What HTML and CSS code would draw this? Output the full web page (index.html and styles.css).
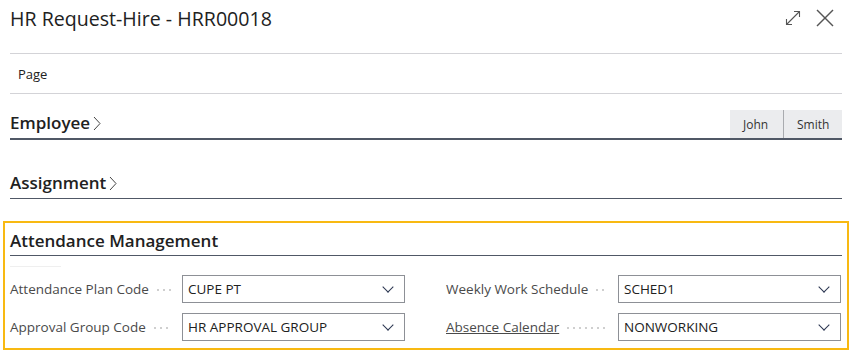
FILE: index.html
```html
<!DOCTYPE html>
<html lang="en">
<head>
  <meta charset="UTF-8" />
  <meta name="viewport" content="width=device-width, initial-scale=1" />
  <title>HR Request-Hire - HRR00018</title>
  <link rel="stylesheet" href="styles.css">
</head>
<body>
  <div class="page">
    <div class="page-header">
      <h1 class="page-title">HR Request-Hire - HRR00018</h1>
      <div class="window-actions">
        <button class="icon-btn" title="Expand">
          <svg width="16" height="16" viewBox="0 0 16 16" fill="none" stroke="#555" stroke-width="1.1">
            <path d="M1.5 14.5 L14.5 1.5" />
            <path d="M9 1.5 H14.5 V7" />
            <path d="M1.5 9 V14.5 H7" />
          </svg>
        </button>
        <button class="icon-btn" title="Close">
          <svg width="18" height="18" viewBox="0 0 18 18" fill="none" stroke="#555" stroke-width="1.4">
            <path d="M1 1 L17 17" />
            <path d="M17 1 L1 17" />
          </svg>
        </button>
      </div>
    </div>

    <div class="action-bar">
      <span class="action">Page</span>
    </div>

    <section class="fasttab employee">
      <div class="fasttab-header thick">
        <h2 class="fasttab-title">Employee<svg class="chevron" width="8" height="15" viewBox="0 0 8 15" fill="none" stroke="#444" stroke-width="1"><path d="M1 1 L7 7.5 L1 14" /></svg></h2>
        <div class="summary">
          <span class="summary-item">John</span>
          <span class="summary-item">Smith</span>
        </div>
      </div>
    </section>

    <section class="fasttab assignment">
      <div class="fasttab-header">
        <h2 class="fasttab-title">Assignment<svg class="chevron" width="8" height="15" viewBox="0 0 8 15" fill="none" stroke="#444" stroke-width="1"><path d="M1 1 L7 7.5 L1 14" /></svg></h2>
      </div>
    </section>
  </div>

  <section class="fasttab expanded">
    <div class="fasttab-header">
      <h2 class="fasttab-title">Attendance Management</h2>
    </div>
    <div class="group-mark"></div>
    <div class="field-grid">
      <div class="field">
        <label class="field-label">Attendance Plan Code<span class="leader"></span></label>
        <div class="select"><span>CUPE PT</span><span class="caret"></span></div>
      </div>
      <div class="field">
        <label class="field-label">Weekly Work Schedule<span class="leader"></span></label>
        <div class="select"><span>SCHED1</span><span class="caret"></span></div>
      </div>
      <div class="field">
        <label class="field-label">Approval Group Code<span class="leader"></span></label>
        <div class="select"><span>HR APPROVAL GROUP</span><span class="caret"></span></div>
      </div>
      <div class="field">
        <label class="field-label"><a href="#" class="link">Absence Calendar</a><span class="leader"></span></label>
        <div class="select"><span>NONWORKING</span><span class="caret"></span></div>
      </div>
    </div>
  </section>
</body>
</html>
```

FILE: styles.css
```css
* {
  box-sizing: border-box;
  margin: 0;
  padding: 0;
}

body {
  font-family: "Segoe UI", "Open Sans", "Noto Sans", sans-serif;
  background: #fff;
  color: #212121;
  width: 853px;
  height: 356px;
  overflow: hidden;
}

.page {
  padding: 0 11px 0 10px;
}

.page-header {
  display: flex;
  justify-content: space-between;
  align-items: flex-start;
  height: 54px;
  border-bottom: 1px solid #d3d3d7;
}

.page-title {
  font-size: 19.6px;
  font-weight: 400;
  line-height: 26px;
  padding-top: 6px;
  color: #212121;
}

.window-actions {
  display: flex;
  align-items: center;
  gap: 15px;
  padding-top: 9px;
  margin-right: 8px;
}

.icon-btn {
  border: none;
  background: none;
  display: flex;
  cursor: pointer;
}

.action-bar {
  height: 40px;
  display: flex;
  align-items: center;
  padding-left: 8px;
  border-bottom: 1px solid #d3d3d7;
}

.action {
  font-size: 13px;
  color: #212121;
}

.fasttab-header {
  display: flex;
  justify-content: space-between;
  align-items: flex-end;
  border-bottom: 1px solid #505866;
}

.fasttab-header.thick {
  border-bottom-width: 2px;
}

.employee {
  padding-top: 16px;
}

.assignment {
  padding-top: 31px;
}

.fasttab-title {
  font-size: 17px;
  font-weight: 600;
  line-height: 24px;
  padding-bottom: 3px;
  color: #212121;
  display: flex;
  align-items: center;
}

.chevron {
  margin-left: 3px;
  margin-top: 1px;
}

.summary {
  display: flex;
}

.summary-item {
  background: #ebecee;
  font-size: 12px;
  color: #333;
  height: 28px;
  display: flex;
  align-items: center;
  padding: 0 13px;
}

.summary-item:first-child {
  width: 54px;
  border-right: 1px solid #a9abaf;
}

.summary-item:last-child {
  width: 58px;
}

.expanded {
  margin: 22px 4px 0 3px;
  border: 2px solid #f8b912;
  padding: 0 5px 7px 5px;
}

.expanded .fasttab-header {
  padding-top: 6px;
}

.expanded .fasttab-title {
  padding-bottom: 2px;
}

.group-mark {
  width: 51px;
  height: 1px;
  background: #efefef;
  margin-top: 10px;
}

.field-grid {
  display: grid;
  grid-template-columns: 395px 395px;
  column-gap: 41px;
  row-gap: 10px;
  margin-top: 8px;
}

.field {
  display: flex;
  align-items: center;
}

.field-label {
  width: 172px;
  display: flex;
  align-items: center;
  font-size: 13.5px;
  color: #4a4a4a;
  padding-right: 10px;
}

.link {
  color: #4a4a4a;
  text-decoration: underline;
}

.leader {
  flex: 1;
  height: 2px;
  margin-left: 8px;
  background-image: linear-gradient(to right, #cfcfcf 2px, transparent 2px);
  background-size: 6px 2px;
  background-repeat: repeat-x;
  position: relative;
  top: 1px;
}

.select {
  width: 223px;
  height: 28px;
  border: 1px solid #8d9096;
  display: flex;
  align-items: center;
  justify-content: space-between;
  padding: 0 12px 0 5px;
  font-size: 13.5px;
  color: #212121;
}

.caret {
  width: 8px;
  height: 8px;
  border-right: 1.2px solid #2a3550;
  border-bottom: 1.2px solid #2a3550;
  transform: rotate(45deg);
  margin-top: -5px;
}
```
